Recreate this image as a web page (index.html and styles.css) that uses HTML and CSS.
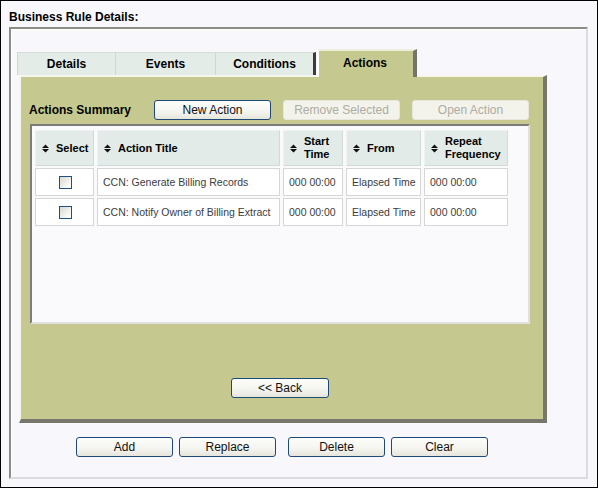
FILE: index.html
```html
<!DOCTYPE html>
<html>
<head>
<meta charset="utf-8">
<link rel="stylesheet" href="styles.css">
</head>
<body>
<div class="page">
  <div class="title">Business Rule Details:</div>
  <div class="frame">
    <div class="tabs">
      <div class="tab tab-first">Details</div>
      <div class="tab">Events</div>
      <div class="tab tab-prev">Conditions</div>
      <div class="tab tab-active">Actions</div>
    </div>
    <div class="panel">
      <div class="toolbar">
        <span class="label">Actions Summary</span>
        <button class="btn btn-tool">New Action</button>
        <button class="btn btn-tool" disabled>Remove Selected</button>
        <button class="btn btn-tool" disabled>Open Action</button>
      </div>
      <div class="gridbox">
        <table class="grid">
          <colgroup>
            <col class="c-select"><col class="c-title"><col class="c-start"><col class="c-from"><col class="c-repeat">
          </colgroup>
          <thead>
            <tr>
              <th><div class="hd"><svg class="sort" width="7" height="9" viewBox="0 0 7 9"><path d="M0 4L3.5 0.5L7 4Z M0 5L3.5 8.5L7 5Z" fill="#111"/></svg><span>Select</span></div></th>
              <th><div class="hd"><svg class="sort" width="7" height="9" viewBox="0 0 7 9"><path d="M0 4L3.5 0.5L7 4Z M0 5L3.5 8.5L7 5Z" fill="#111"/></svg><span>Action Title</span></div></th>
              <th><div class="hd"><svg class="sort" width="7" height="9" viewBox="0 0 7 9"><path d="M0 4L3.5 0.5L7 4Z M0 5L3.5 8.5L7 5Z" fill="#111"/></svg><span>Start<br>Time</span></div></th>
              <th><div class="hd"><svg class="sort" width="7" height="9" viewBox="0 0 7 9"><path d="M0 4L3.5 0.5L7 4Z M0 5L3.5 8.5L7 5Z" fill="#111"/></svg><span>From</span></div></th>
              <th><div class="hd"><svg class="sort" width="7" height="9" viewBox="0 0 7 9"><path d="M0 4L3.5 0.5L7 4Z M0 5L3.5 8.5L7 5Z" fill="#111"/></svg><span>Repeat<br>Frequency</span></div></th>
            </tr>
          </thead>
          <tbody>
            <tr>
              <td class="center"><input type="checkbox" class="chk"></td>
              <td>CCN: Generate Billing Records</td>
              <td>000 00:00</td>
              <td>Elapsed Time</td>
              <td>000 00:00</td>
            </tr>
            <tr>
              <td class="center"><input type="checkbox" class="chk"></td>
              <td>CCN: Notify Owner of Billing Extract</td>
              <td>000 00:00</td>
              <td>Elapsed Time</td>
              <td>000 00:00</td>
            </tr>
          </tbody>
        </table>
      </div>
      <div class="back-row"><button class="btn btn-back">&lt;&lt; Back</button></div>
    </div>
    <div class="actions-row">
      <button class="btn btn-main">Add</button>
      <button class="btn btn-main gap-s">Replace</button>
      <button class="btn btn-main gap-l">Delete</button>
      <button class="btn btn-main gap-s">Clear</button>
    </div>
  </div>
</div>
</body>
</html>
```

FILE: styles.css
```css
* { box-sizing: border-box; }

body {
  margin: 0;
  font-family: "Liberation Sans", Arial, sans-serif;
}

.page {
  width: 598px;
  height: 488px;
  border: 1px solid #000;
  background: #f8f8fc;
  padding: 9px 9px 0 8px;
  overflow: hidden;
}

.title {
  font-size: 12px;
  font-weight: bold;
  line-height: 14px;
  height: 14px;
  color: #000;
}

.frame {
  margin-top: 3px;
  height: 452px;
  border: 2px solid;
  border-color: #8c8c84 #dcdcdc #dcdcdc #8c8c84;
  box-shadow: inset 1px 1px 0 #ffffff;
  padding: 20px 0 0 6px;
}

/* Tabs */
.tabs {
  display: flex;
  align-items: flex-end;
  height: 26px;
}

.tab {
  width: 100px;
  height: 23px;
  background: #e4ece8;
  border-top: 1px solid #d6dcd8;
  border-right: 1px solid #d0d6d2;
  font-size: 12px;
  font-weight: bold;
  line-height: 22px;
  text-align: center;
  color: #000;
}

.tab-first {
  width: 99px;
  border-left: 1px solid #d0d6d2;
}

.tab-prev {
  border-right: 3px solid #3c3c3c;
}

.tab-active {
  position: relative;
  z-index: 1;
  margin-left: 1px;
  height: 28px;
  margin-bottom: -2px;
  background: #c5c98f;
  border-top: 2px solid #eeeedc;
  border-left: 2px solid #ffffff;
  border-right: 4px solid #74746a;
  line-height: 25px;
  padding-right: 2px;
}

/* Panel */
.panel {
  margin-left: 2px;
  width: 528px;
  height: 348px;
  background: #c5c98f;
  border-top: 2px solid #f6f6ee;
  border-left: 2px solid #f6f6ee;
  border-right: 4px solid #77776b;
  border-bottom: 4px solid #77776b;
  padding: 23px 0 0 8px;
}

.toolbar {
  display: flex;
  align-items: center;
  height: 20px;
}

.label {
  width: 125px;
  font-size: 12px;
  font-weight: bold;
  color: #000;
}

/* Buttons */
.btn {
  font-family: "Liberation Sans", Arial, sans-serif;
  font-size: 12px;
  color: #111;
  height: 20px;
  padding: 0;
  border: 1px solid #1f4a78;
  border-radius: 3px;
  background: linear-gradient(#fdfdfb 0%, #f4f4ef 60%, #e6e5dc 100%);
  line-height: 18px;
}

.btn:disabled {
  color: #aeaca2;
  border-color: #e6e6de;
  background: #f3f3ec;
}

.btn-tool {
  width: 117px;
  margin-right: 12px;
}

.btn-back {
  width: 98px;
}

.btn-main {
  width: 97px;
}

.gap-s { margin-left: 6px; }
.gap-l { margin-left: 12px; }

/* Grid */
.gridbox {
  margin: 4px 0 0 1px;
  width: 500px;
  height: 200px;
  border: 2px solid;
  border-color: #7c7c7c #e0e0e0 #e0e0e0 #7c7c7c;
  background: #fafafc;
}

.grid {
  table-layout: fixed;
  width: 479px;
  border-collapse: separate;
  border-spacing: 3px 2px;
  margin-top: 2px;
  font-size: 11px;
}

.c-select { width: 59px; }
.c-title { width: 183px; }
.c-start { width: 60px; }
.c-from { width: 75px; }
.c-repeat { width: 84px; }

.grid th {
  height: 36px;
  padding: 0 2px 0 6px;
  background: #e2ebe7;
  border: 1px solid;
  border-color: #eef3f0 #d2dad6 #d2dad6 #eef3f0;
  text-align: left;
  font-weight: bold;
  color: #000;
  vertical-align: middle;
}

.hd {
  display: flex;
  align-items: center;
  white-space: nowrap;
  line-height: 13px;
}

.sort {
  flex: none;
  margin-right: 7px;
}

.grid td {
  height: 28px;
  padding: 0 0 0 5px;
  background: #ffffff;
  border: 1px solid #d6d6d6;
  color: #3c3c3c;
  font-size: 10.5px;
  white-space: nowrap;
  overflow: hidden;
  vertical-align: middle;
}

.grid td.center {
  padding: 0 0 0 1px;
  text-align: center;
}

.chk {
  -webkit-appearance: none;
  appearance: none;
  display: block;
  margin: 0 auto;
  width: 13px;
  height: 13px;
  border: 1px solid #1c5180;
  background: linear-gradient(135deg, #d8d8d0 0%, #f2f2ee 60%, #ffffff 100%);
}

.back-row {
  margin: 54px 0 0 1px;
  width: 500px;
  text-align: center;
}

.actions-row {
  margin: 14px 0 0 2px;
  padding-left: 57px;
  display: flex;
}
```
